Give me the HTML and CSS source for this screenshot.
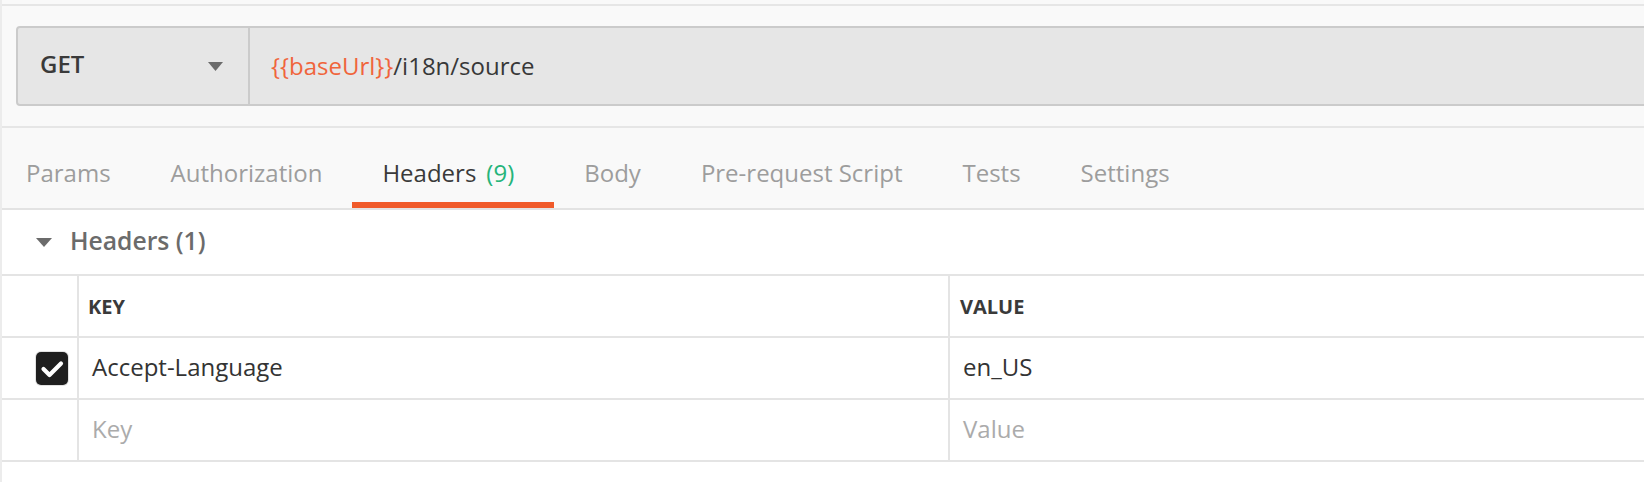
FILE: index.html
```html
<!DOCTYPE html>
<html lang="en">
<head>
<meta charset="utf-8">
<title>Request</title>
<link rel="stylesheet" href="styles.css">
</head>
<body>
<div class="app">
  <section class="request-area">
    <div class="request-inner">
      <div class="request-bar">
        <div class="method">
          <span class="method-name">GET</span>
          <svg class="caret" width="15" height="9" viewBox="0 0 15 9"><path d="M0 0 H15 L7.5 9 Z" fill="#6b6b6b"/></svg>
        </div>
        <div class="url"><span class="var">{{baseUrl}}</span>/i18n/source</div>
      </div>
    </div>
  </section>

  <nav class="tabs">
    <div class="tab">Params</div>
    <div class="tab">Authorization</div>
    <div class="tab active">Headers<span class="count">(9)</span></div>
    <div class="tab">Body</div>
    <div class="tab">Pre-request Script</div>
    <div class="tab">Tests</div>
    <div class="tab">Settings</div>
  </nav>

  <div class="section-title">
    <svg class="toggle" width="16" height="9" viewBox="0 0 16 9"><path d="M0 0 H16 L8 9 Z" fill="#6b6b6b"/></svg>
    <span>Headers (1)</span>
  </div>

  <div class="table">
    <div class="row head">
      <div class="cell check"></div>
      <div class="cell key"><span class="th">KEY</span></div>
      <div class="cell value"><span class="th">VALUE</span></div>
    </div>
    <div class="row">
      <div class="cell check">
        <span class="checkbox">
          <svg width="32" height="32" viewBox="0 0 32 32"><path d="M7.5 17 L13.5 23 L25 11.5" fill="none" stroke="#fff" stroke-width="4.2" stroke-linecap="round" stroke-linejoin="round"/></svg>
        </span>
      </div>
      <div class="cell key"><span class="txt">Accept-Language</span></div>
      <div class="cell value"><span class="txt">en_US</span></div>
    </div>
    <div class="row">
      <div class="cell check"></div>
      <div class="cell key"><span class="txt placeholder">Key</span></div>
      <div class="cell value"><span class="txt placeholder">Value</span></div>
    </div>
  </div>
</div>
</body>
</html>
```

FILE: styles.css
```css
html, body {
  margin: 0;
  padding: 0;
  background: #ffffff;
}

body {
  font-family: "Open Sans", "Liberation Sans", sans-serif;
  color: #333333;
  overflow: hidden;
}

.app {
  border-left: 2px solid #ececec;
  min-height: 482px;
  box-sizing: border-box;
}

.request-area {
  background: #f9f9f9;
  padding-top: 4px;
  overflow: hidden;
}

.request-inner {
  border-top: 2px solid #e6e6e6;
  border-bottom: 2px solid #e6e6e6;
  padding: 20px 0 20px 14px;
}

.request-bar {
  display: flex;
  height: 80px;
  box-sizing: border-box;
  margin-right: -20px;
  background: #e6e6e6;
  border: 2px solid #cbcbcb;
  border-radius: 4px;
}

.method {
  width: 232px;
  display: flex;
  align-items: center;
  justify-content: space-between;
  padding: 0 25px 0 22px;
  box-sizing: border-box;
  border-right: 2px solid #cbcbcb;
}

.method-name {
  font-size: 24px;
  font-weight: 600;
  color: #3a3a3a;
  margin-bottom: 5px;
}

.caret {
  display: block;
  margin-top: 1px;
}

.url {
  display: flex;
  align-items: center;
  padding-left: 21px;
  padding-bottom: 1px;
  font-size: 24px;
  color: #383838;
}

.var {
  color: #f0643b;
}

.tabs {
  display: flex;
  background: #f9f9f9;
  border-bottom: 2px solid #e3e3e3;
}

.tab {
  height: 80px;
  box-sizing: border-box;
  padding: 29px 30px 0;
  font-size: 24px;
  line-height: 32px;
  color: #9d9d9d;
  border-bottom: 6px solid transparent;
  white-space: nowrap;
}

.tab:first-child {
  padding-left: 24px;
}

.tab.active {
  color: #3a3a3a;
  border-bottom-color: #f05a2a;
}

.count {
  margin: 0 10px;
  color: #26b47a;
}

.section-title {
  height: 64px;
  box-sizing: content-box;
  display: flex;
  align-items: center;
  padding-left: 34px;
  border-bottom: 2px solid #e4e4e4;
  font-size: 24.7px;
  font-weight: 600;
  color: #6b6b6b;
}

.section-title span {
  margin-bottom: 4px;
}

.toggle {
  display: block;
  margin-right: 18px;
}

.row {
  display: grid;
  grid-template-columns: 77px 871px 1fr;
  height: 62px;
  box-sizing: border-box;
  border-bottom: 2px solid #e4e4e4;
}

.cell {
  display: flex;
  align-items: center;
  box-sizing: border-box;
}

.cell.check,
.cell.key {
  border-right: 2px solid #e4e4e4;
}

.cell.check {
  justify-content: flex-end;
  padding-right: 9px;
}

.th {
  font-size: 20px;
  font-weight: 700;
  color: #3a3a3a;
  padding-left: 9px;
}

.cell.value .th {
  padding-left: 10px;
}

.txt {
  font-size: 24px;
  color: #333333;
  padding-left: 13px;
  margin-bottom: 3px;
}

.txt.placeholder {
  color: #ababab;
}

.checkbox {
  display: block;
  width: 32px;
  height: 33px;
  border-radius: 5px;
  background: #1f1f1f;
  box-shadow: 0 0 0 1px #e2e2e2;
}

.checkbox svg {
  display: block;
}
```
